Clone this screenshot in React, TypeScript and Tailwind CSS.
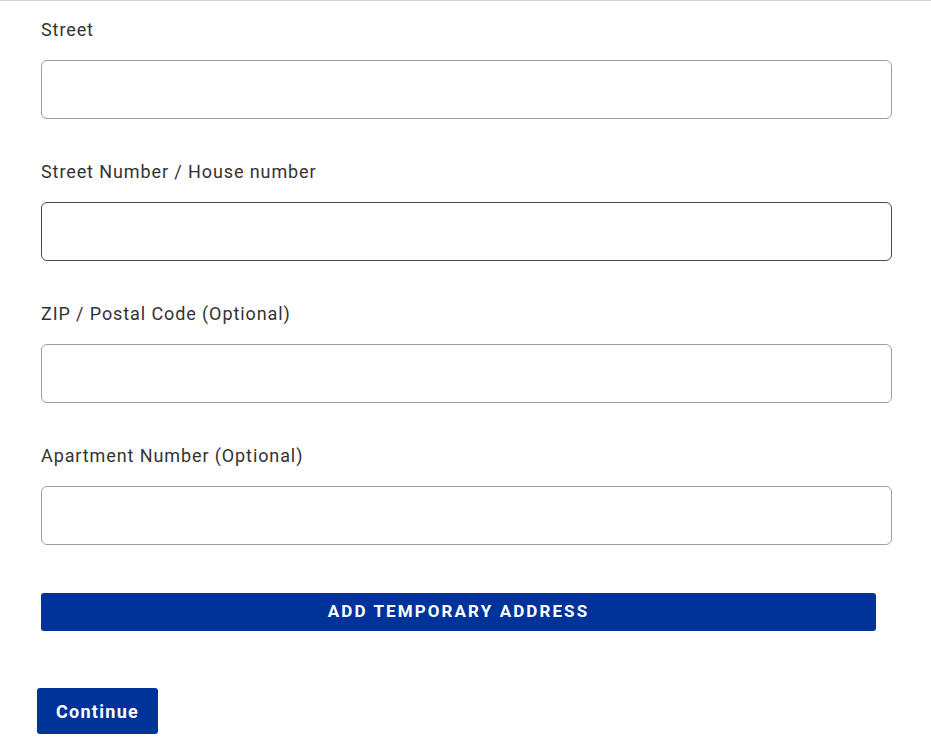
const fields = [
  { label: "Street", focused: false },
  { label: "Street Number / House number", focused: true },
  { label: "ZIP / Postal Code (Optional)", focused: false },
  { label: "Apartment Number (Optional)", focused: false },
];

export default function App() {
  return (
    <div className="min-h-[756px] bg-white border-t border-[#d4d4d4] font-['Roboto',sans-serif] text-[#333333]">
      <div className="flex flex-col items-start pl-[41px] pt-[17px]">
        <div className="flex flex-col gap-[41px]">
          {fields.map((f) => (
            <div key={f.label}>
              <label className="block text-[18px] leading-6 tracking-[0.9px] mb-[18px]">{f.label}</label>
              <input
                type="text"
                className={`block w-[851px] h-[59px] rounded-md bg-white px-4 outline-none border ${
                  f.focused ? "border-[#4a4a4a]" : "border-[#9e9e9e]"
                }`}
              />
            </div>
          ))}
        </div>
        <button className="mt-[48px] w-[835px] h-[38px] rounded-[3px] bg-[#003399] text-white font-bold text-[17px] tracking-[2.1px] uppercase">
          Add Temporary Address
        </button>
        <button className="mt-[57px] -ml-1 h-[46px] w-[121px] rounded-[3px] bg-[#003399] text-white font-bold text-[18px] tracking-[1.3px]">
          Continue
        </button>
      </div>
    </div>
  );
}
